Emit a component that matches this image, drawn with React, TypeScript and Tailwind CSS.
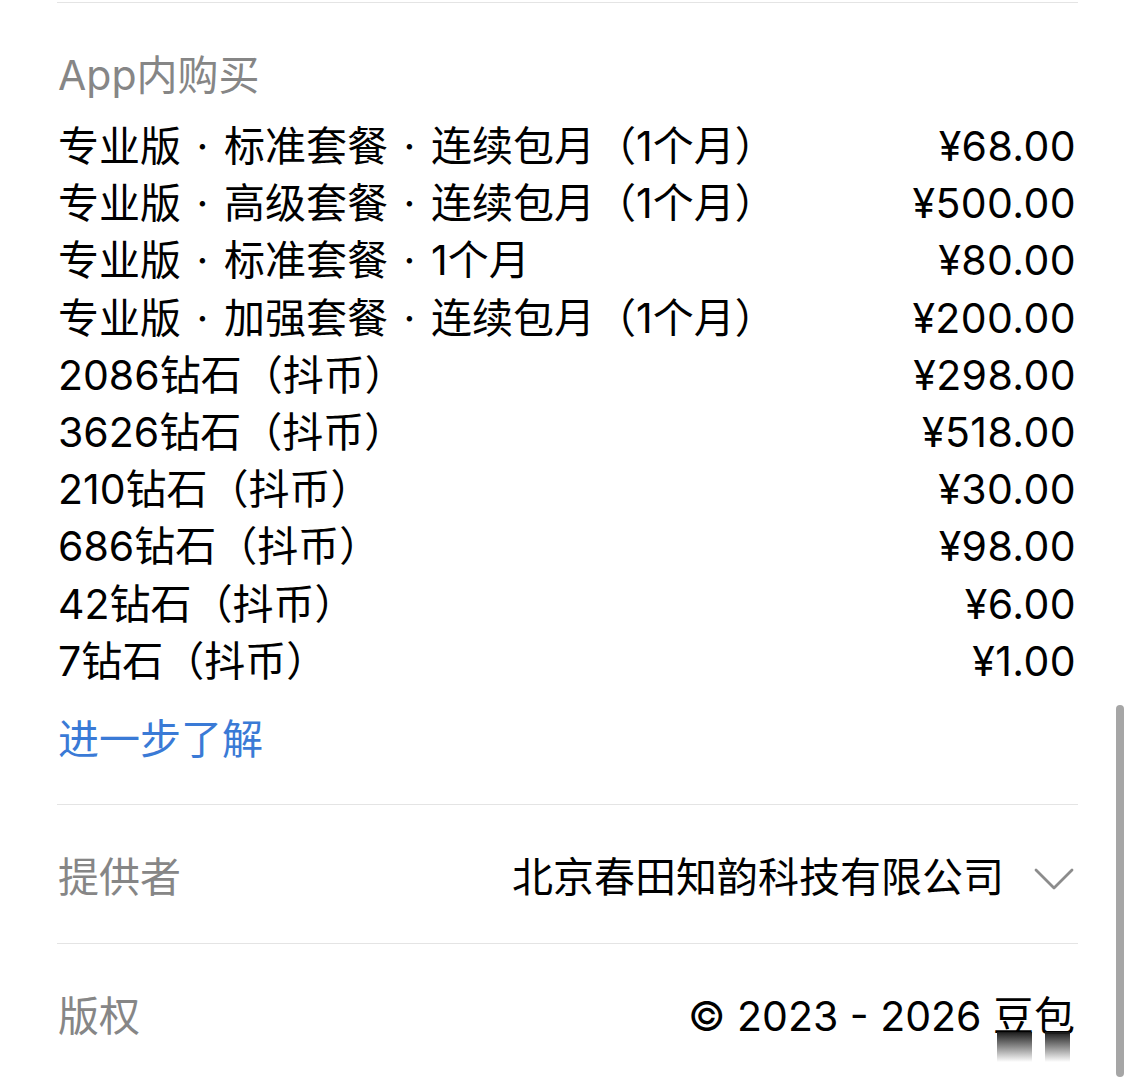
const items = [
  { name: ["专业版", "标准套餐", "连续包月（1个月）"], price: "¥68.00" },
  { name: ["专业版", "高级套餐", "连续包月（1个月）"], price: "¥500.00" },
  { name: ["专业版", "标准套餐", "1个月"], price: "¥80.00" },
  { name: ["专业版", "加强套餐", "连续包月（1个月）"], price: "¥200.00" },
  { name: ["2086钻石（抖币）"], price: "¥298.00" },
  { name: ["3626钻石（抖币）"], price: "¥518.00" },
  { name: ["210钻石（抖币）"], price: "¥30.00" },
  { name: ["686钻石（抖币）"], price: "¥98.00" },
  { name: ["42钻石（抖币）"], price: "¥6.00" },
  { name: ["7钻石（抖币）"], price: "¥1.00" },
];

export default function App() {
  return (
    <div className="relative h-[1080px] w-[1126px] overflow-hidden bg-white font-['Inter','Noto_Sans_CJK_SC',sans-serif] text-[41px] text-black">
      <div className="pl-[57px] pr-[48px]">
        <div className="mt-[2px] border-t border-[#e4e4e4]" />

        <div className="pl-px pr-[2px]">
          <div className="pt-[44px] leading-[57px] text-[#868686]">App内购买</div>

          <div className="mt-[14px]">
            {items.map((it, i) => (
              <div key={i} className="flex items-center justify-between leading-[57.2px]">
                <div className="flex items-center whitespace-nowrap">
                  {it.name.map((part, j) => (
                    <span key={j} className="flex items-center">
                      {j > 0 && <span className="inline-block w-[43px] text-center">·</span>}
                      {part}
                    </span>
                  ))}
                </div>
                <div className="tracking-[0.01em]">{it.price}</div>
              </div>
            ))}
          </div>

          <div className="mt-[21px] mb-[36px] leading-[57px] text-[#3a7ad6]">进一步了解</div>
        </div>

        <div className="border-t border-[#e4e4e4]" />

        <div className="flex items-center justify-between pl-px pr-[4px] pt-[44px] pb-[37px] leading-[57px]">
          <span className="text-[#868686]">提供者</span>
          <span className="flex items-center gap-[30px]">
            北京春田知韵科技有限公司
            <svg width="40" height="24" viewBox="0 0 40 24" fill="none" className="mt-[2px]">
              <polyline points="2,3 20,21 38,3" stroke="#8c8c8c" strokeWidth="2.8" strokeLinecap="round" strokeLinejoin="round" />
            </svg>
          </span>
        </div>

        <div className="border-t border-[#e4e4e4]" />

        <div className="flex items-center justify-between pl-px pr-[3px] pt-[44px] leading-[57px]">
          <span className="text-[#868686]">版权</span>
          <span>© 2023 - 2026 豆包</span>
        </div>
      </div>

      {/* watermark smear */}
      <div className="absolute left-[997px] top-[1032px] h-[30px] w-[35px] bg-gradient-to-b from-[#1c1c1c] to-transparent" />
      <div className="absolute left-[1045px] top-[1032px] h-[30px] w-[25px] bg-gradient-to-b from-[#1c1c1c] to-transparent" />

      {/* scrollbar */}
      <div className="absolute left-[1116px] top-[705px] h-[372px] w-[8px] rounded-full bg-[#a6a6a6]" />
    </div>
  );
}
